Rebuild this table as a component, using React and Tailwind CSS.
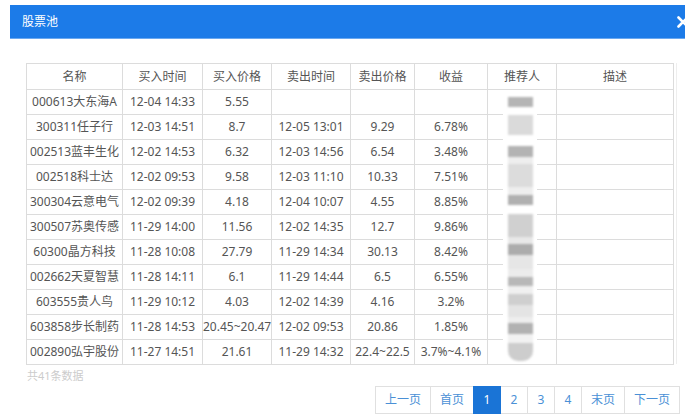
import React from "react";

const rows = [
  ["000613大东海A", "12-04 14:33", "5.55", "", "", ""],
  ["300311任子行", "12-03 14:51", "8.7", "12-05 13:01", "9.29", "6.78%"],
  ["002513蓝丰生化", "12-02 14:53", "6.32", "12-03 14:56", "6.54", "3.48%"],
  ["002518科士达", "12-02 09:53", "9.58", "12-03 11:10", "10.33", "7.51%"],
  ["300304云意电气", "12-02 09:39", "4.18", "12-04 10:07", "4.55", "8.85%"],
  ["300507苏奥传感", "11-29 14:00", "11.56", "12-02 14:35", "12.7", "9.86%"],
  ["60300晶方科技", "11-28 10:08", "27.79", "11-29 14:34", "30.13", "8.42%"],
  ["002662天夏智慧", "11-28 14:11", "6.1", "11-29 14:44", "6.5", "6.55%"],
  ["603555贵人鸟", "11-29 10:12", "4.03", "12-02 14:39", "4.16", "3.2%"],
  ["603858步长制药", "11-28 14:53", "20.45~20.47", "12-02 09:53", "20.86", "1.85%"],
  ["002890弘宇股份", "11-27 14:51", "21.61", "11-29 14:32", "22.4~22.5", "3.7%~4.1%"],
];

const headers = ["名称", "买入时间", "买入价格", "卖出时间", "卖出价格", "收益", "推荐人", "描述"];
const widths = ["w-[96px]", "w-[80px]", "w-[69px]", "w-[79px]", "w-[64px]", "w-[73px]", "w-[69px]", "w-[117px]"];

const blocks = [
  [5, "#ffffff"],
  [10, "#b5b5b5"],
  [8, "#ffffff"],
  [20, "#dadada"],
  [11, "#ffffff"],
  [11, "#b3b3b3"],
  [7, "#eeeeee"],
  [23, "#dcdcdc"],
  [8, "#eeeeee"],
  [10, "#b0b0b0"],
  [9, "#ffffff"],
  [23, "#d0d0d0"],
  [7, "#e8e8e8"],
  [11, "#acacac"],
  [14, "#e6e6e6"],
  [8, "#ececec"],
  [9, "#b8b8b8"],
  [8, "#f0f0f0"],
  [11, "#cfcfcf"],
  [12, "#e4e4e4"],
  [6, "#eeeeee"],
  [11, "#b2b2b2"],
  [9, "#f2f2f2"],
  [18, "#cdcdcd"],
];

const pages = [
  ["上一页", "w-[56px]", false],
  ["首页", "w-[44px]", false],
  ["1", "w-[28px]", true],
  ["2", "w-[28px]", false],
  ["3", "w-[28px]", false],
  ["4", "w-[28px]", false],
  ["末页", "w-[44px]", false],
  ["下一页", "w-[56px]", false],
];

export default function App() {
  return (
    <div
      className="w-[685px] h-[415px] overflow-hidden bg-white flex flex-col pt-[5px] pl-[10px]"
      style={{ fontFamily: '"Noto Sans", "Noto Sans CJK SC", sans-serif' }}
    >
      <div className="w-[685px] h-[34px] flex-none bg-[#1c7be8] border-b border-[#6aa8f0] flex items-center pl-[12px] pr-[6px]">
        <span className="text-white text-[12px] leading-none">股票池</span>
        <svg className="ml-auto" width="12" height="12" viewBox="0 0 12 12">
          <path d="M1.5 1.5 L10.5 10.5 M10.5 1.5 L1.5 10.5" stroke="#fff" strokeWidth="2.6" strokeLinecap="round" />
        </svg>
      </div>

      <div className="pl-[16px] pt-[24px] flex">
        <div className="relative">
          <table className="border-collapse text-[12px] text-[#555] table-fixed w-[648px]">
            <thead>
              <tr className="h-[26px]">
                {headers.map((h, i) => (
                  <th key={i} className={`${widths[i]} border border-[#dcdcdc] font-normal text-center text-[#555] p-0`}>
                    {h}
                  </th>
                ))}
              </tr>
            </thead>
            <tbody>
              {rows.map((r, i) => (
                <tr key={i} className="h-[25px]">
                  {r.map((c, j) => (
                    <td key={j} className="border border-[#dcdcdc] text-center p-0 whitespace-nowrap">
                      {c}
                    </td>
                  ))}
                  <td className="border border-[#dcdcdc] p-0"></td>
                  <td className="border border-[#dcdcdc] p-0"></td>
                </tr>
              ))}
            </tbody>
          </table>
          <div className="absolute left-[477px] top-[29px] w-[34px] h-[272px] bg-white pl-[5px] pr-[4px] flex flex-col">
            <div className="flex flex-col blur-[1px]">
              {blocks.map(([h, c], i) => (
                <div
                  key={i}
                  className={i === blocks.length - 1 ? "rounded-b-[10px]" : ""}
                  style={{ height: h, backgroundColor: c }}
                />
              ))}
            </div>
          </div>
          <div className="absolute left-[650px] top-0 w-px h-[301px] bg-[#eeeeee]" />
        </div>
      </div>

      <div className="pl-[17px] pt-[4px] text-[11px] leading-[13px] text-[#cccccc]">共41条数据</div>

      <div className="flex justify-end pr-[5px] pt-[4px]">
        <div className="flex">
          {pages.map(([t, w, active], i) => (
            <div
              key={i}
              className={`${w} h-[28px] flex items-center justify-center text-[12px] border ${
                i > 0 ? "-ml-px" : ""
              } ${active ? "bg-[#1a74d6] border-[#1a74d6] text-white relative" : "bg-white border-[#e0e0e0] text-[#4a90d6]"}`}
            >
              {t}
            </div>
          ))}
        </div>
      </div>
    </div>
  );
}
